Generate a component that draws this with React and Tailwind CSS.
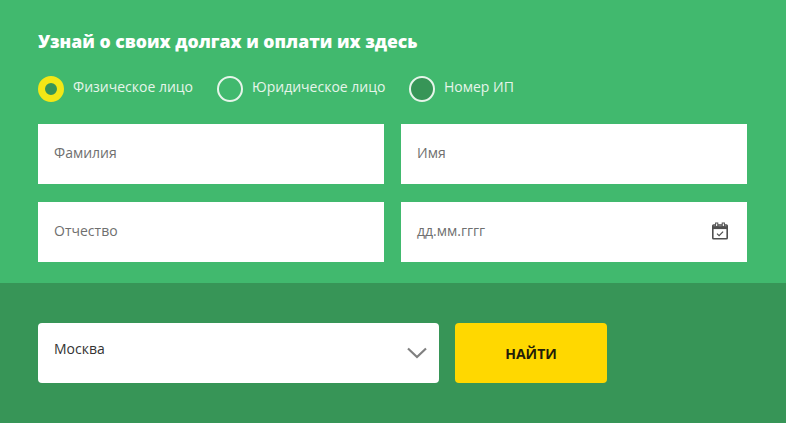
import React from "react";

const font = "font-['Open_Sans',sans-serif]";

const Radio = ({ label, ring, fill, width }) => (
  <div className={`flex items-center gap-[9px] ${width}`}>
    <span className={`w-[26px] h-[26px] rounded-full shrink-0 ${ring} ${fill}`} />
    <span className="text-[14px] leading-[20px] text-[#e6f5ea] -translate-y-[2px]">{label}</span>
  </div>
);

const Field = ({ label, children }) => (
  <div className="w-[346px] h-[60px] bg-white flex items-center justify-between pl-[16px] pr-[18px]">
    <span className="text-[14px] text-[#6f6f6f] -translate-y-[2px]">{label}</span>
    {children}
  </div>
);

const App = () => {
  return (
    <div className={`w-[786px] h-[423px] overflow-hidden ${font}`}>
      <div className="h-[283px] bg-[#41b96e] pl-[38px] pt-[29px]">
        <h1 className="text-[17.6px] leading-[24px] font-extrabold text-white">
          Узнай о своих долгах и оплати их здесь
        </h1>
        <div className="flex mt-[23px]">
          <Radio label="Физическое лицо" ring="border-[7px] border-[#f3e716]" fill="bg-[#379557]" width="w-[179px]" />
          <Radio label="Юридическое лицо" ring="border-2 border-[#e6f5ea]" fill="" width="w-[192px]" />
          <Radio label="Номер ИП" ring="border-2 border-[#e6f5ea]" fill="bg-[#379557]" />
        </div>
        <div className="grid grid-cols-[346px_346px] gap-x-[17px] gap-y-[18px] mt-[22px]">
          <Field label="Фамилия" />
          <Field label="Имя" />
          <Field label="Отчество" />
          <Field label="дд.мм.гггг">
            <svg width="18" height="18" viewBox="0 0 18 18" fill="none" stroke="#4f4f4f" strokeWidth="1.6" className="-translate-y-px">
              <rect x="1.8" y="3" width="14.4" height="13.8" rx="0.8" />
              <path d="M1.8 5.6h14.4" strokeWidth="3" />
              <rect x="4.6" y="1" width="2.2" height="3.6" fill="#fff" strokeWidth="1" />
              <rect x="11.2" y="1" width="2.2" height="3.6" fill="#fff" strokeWidth="1" />
              <path d="M6 11.6l2.1 2 4-4" strokeWidth="1.2" />
            </svg>
          </Field>
        </div>
      </div>
      <div className="h-[140px] bg-[#379557] pl-[38px] pt-[40px] flex items-start gap-[16px]">
        <div className="w-[401px] h-[60px] bg-white rounded-[4px] flex items-center justify-between pl-[16px] pr-[12px]">
          <span className="text-[14px] text-[#333] -translate-y-[5px]">Москва</span>
          <svg width="20" height="12" viewBox="0 0 20 12" fill="none" stroke="#808080" strokeWidth="2.2">
            <path d="M1 1.5l9 8.5 9-8.5" />
          </svg>
        </div>
        <button className="w-[152px] h-[60px] bg-[#ffd800] rounded-[4px] text-[14px] font-bold text-[#231d08]">
          НАЙТИ
        </button>
      </div>
    </div>
  );
};

export default App;
